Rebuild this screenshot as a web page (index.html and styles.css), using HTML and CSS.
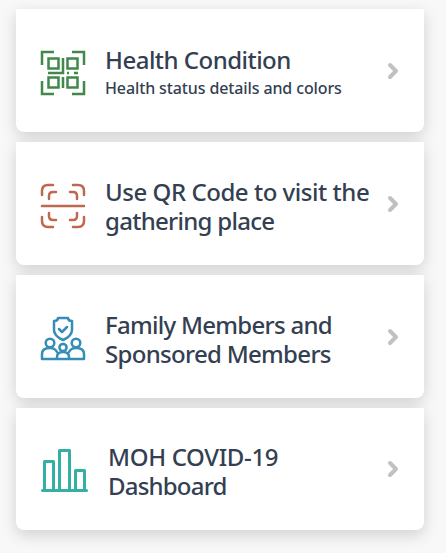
FILE: index.html
```html
<!DOCTYPE html>
<html lang="en">
<head>
<meta charset="utf-8">
<title>Health services</title>
<link rel="stylesheet" href="styles.css">
</head>
<body>
<main class="list">
  <a class="card">
    <svg class="icon green" viewBox="0 0 44 44">
      <path d="M1 14V1h12M31 1h12v13M1 30v13h12M31 43h12V30"/>
      <path d="M7.500 7.500h10v10h-10zM26.500 7.500h10v10h-10zM7.500 26.500h10v10h-10zM26.500 26.500h10v10h-10z"/>
      <path d="M22 7v15H7M22 26v11M26 22h2M33 22h4"/>
    </svg>
    <div class="text">
      <h2><span class="t1">Health Condition</span></h2>
      <p>Health status details and colors</p>
    </div>
    <svg class="arrow" viewBox="0 0 10 16"><path d="M2 2l6 6-6 6"/></svg>
  </a>
  <a class="card">
    <svg class="icon red" viewBox="0 0 44 44">
      <path d="M1 11V7q0-6 6-6h5M32 1h5q6 0 6 6v4M1 33v4q0 6 6 6h5M32 43h5q6 0 6-6v-4"/>
      <path d="M8 15v-3q0-4 4-4h3M29 8h3q4 0 4 4v3M8 29v3q0 4 4 4h3M29 36h3q4 0 4-4v-3M1 22h42"/>
    </svg>
    <div class="text">
      <h2><span class="t2">Use QR Code to visit the</span><span class="t3">gathering place</span></h2>
    </div>
    <svg class="arrow" viewBox="0 0 10 16"><path d="M2 2l6 6-6 6"/></svg>
  </a>
  <a class="card">
    <svg class="icon blue" viewBox="0 0 44 44">
      <path d="M17 1h10q0 3 4 3v9q0 6-9 10-9-4-9-10V4q4 0 4-3z"/>
      <path d="M18 12l3 3 5-5"/>
      <circle cx="9" cy="26" r="4.300"/><circle cx="35" cy="26" r="4.300"/><circle cx="22" cy="30.500" r="3.600"/>
      <path d="M16 42H1v-5q0-6 8-6 5 0 7 4M28 42h15v-5q0-6-8-6-5 0-7 4M16 42v-2q0-5 6-5t6 5v2z"/>
    </svg>
    <div class="text">
      <h2><span class="t4">Family Members and</span><span class="t5">Sponsored Members</span></h2>
    </div>
    <svg class="arrow" viewBox="0 0 10 16"><path d="M2 2l6 6-6 6"/></svg>
  </a>
  <a class="card last">
    <svg class="icon teal" viewBox="0 0 47 44">
      <path d="M1.500 41.500h44M3.500 41.500v-29h9v29M18.500 41.500v-40h10v40M34.500 41.500v-20h9v20"/>
    </svg>
    <div class="text">
      <h2><span class="t6">MOH COVID-19</span><span class="t7">Dashboard</span></h2>
    </div>
    <svg class="arrow" viewBox="0 0 10 16"><path d="M2 2l6 6-6 6"/></svg>
  </a>
</main>
</body>
</html>
```
FILE: styles.css
```css
* { box-sizing: border-box; }
body {
  margin: 0;
  height: 553px;
  overflow: hidden;
  background: #f8f8f8;
  color: #343f52;
  font-family: "Noto Sans", "Open Sans", sans-serif;
}
.list {
  display: flex;
  flex-direction: column;
  gap: 10px;
  padding: 9px 22px 0 16px;
}
.card {
  display: flex;
  align-items: center;
  height: 123px;
  padding: 4px 26px 0 25px;
  background: #fff;
  border-radius: 0 0 8px 8px;
  box-shadow: 0 5px 16px rgba(0, 0, 0, .16);
}
.last { height: 122px; }
.icon {
  flex: none;
  width: 44px;
  height: 44px;
  fill: none;
  stroke-width: 2.5;
  stroke-linecap: round;
  stroke-linejoin: round;
  overflow: visible;
}
.green { stroke: #40894b; stroke-linecap: butt; stroke-linejoin: miter; }
.red { stroke: #c0674f; }
.blue { stroke: #368db5; }
.teal { stroke: #34afa3; width: 47px; stroke-width: 3; }
.text {
  flex: 1;
  margin-left: 20px;
  padding-top: 2px;
  white-space: nowrap;
}
h2 {
  margin: 0;
  font-size: 24px;
  font-weight: 500;
  line-height: 28.8px;
}
h2 span { display: block; }
.t1 { letter-spacing: -.52px; }
.t2 { letter-spacing: -.46px; }
.t3 { letter-spacing: -.72px; }
.t4 { letter-spacing: -.72px; }
.t5 { letter-spacing: -.7px; }
.t6 { letter-spacing: -.35px; }
.t7 { letter-spacing: -.8px; }
p {
  margin: 1px 0;
  font-size: 16px;
  font-weight: 500;
  line-height: 24px;
  letter-spacing: -.12px;
}
.arrow {
  flex: none;
  width: 10px;
  height: 16px;
  margin-top: -4px;
  fill: none;
  stroke: #c1c1c1;
  stroke-width: 4;
  stroke-linecap: round;
  stroke-linejoin: round;
  overflow: visible;
}
```
